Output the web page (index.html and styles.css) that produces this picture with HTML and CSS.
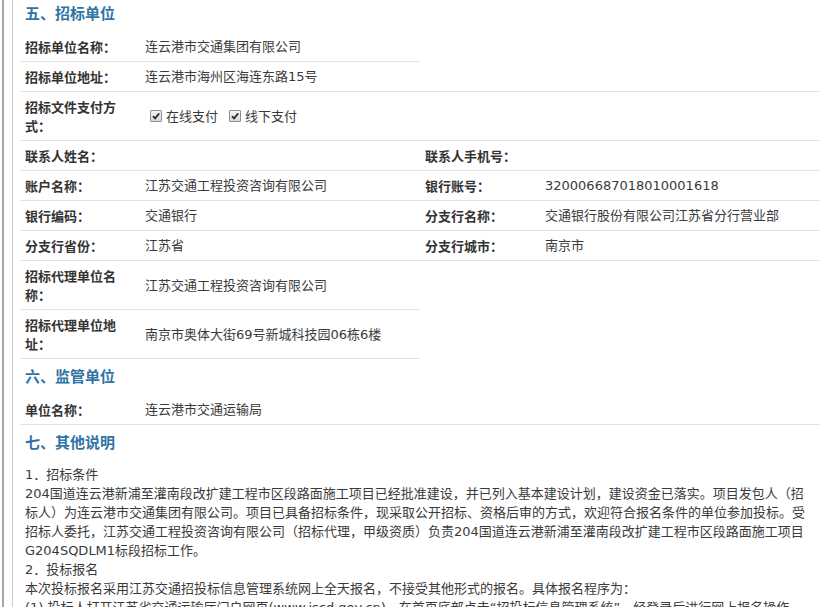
FILE: index.html
```html
<!DOCTYPE html>
<html lang="zh-CN">
<head>
<meta charset="utf-8">
<title>招标公告</title>
<link rel="stylesheet" href="styles.css">
</head>
<body>
<div class="outer">
  <div class="inner">
    <div class="content">
      <h2 class="sec-title">五、招标单位</h2>
      <div class="grid">
        <div class="item half"><span class="lbl">招标单位名称：</span><span class="val">连云港市交通集团有限公司</span></div>
        <div class="empty"></div>
        <div class="item full"><span class="lbl">招标单位地址：</span><span class="val">连云港市海州区海连东路15号</span></div>
        <div class="item full"><span class="lbl">招标文件支付方式：</span><span class="val checks"><span class="cb"><svg viewBox="0 0 10 10" width="10" height="10"><path d="M2 5.2 L4.1 7.4 L8.2 2.4" fill="none" stroke="#2b2b2b" stroke-width="1.7"/></svg></span><span class="cbt">在线支付</span><span class="cb"><svg viewBox="0 0 10 10" width="10" height="10"><path d="M2 5.2 L4.1 7.4 L8.2 2.4" fill="none" stroke="#2b2b2b" stroke-width="1.7"/></svg></span><span class="cbt">线下支付</span></span></div>
        <div class="item half"><span class="lbl">联系人姓名：</span><span class="val"></span></div>
        <div class="item half"><span class="lbl">联系人手机号：</span><span class="val"></span></div>
        <div class="item half"><span class="lbl">账户名称：</span><span class="val">江苏交通工程投资咨询有限公司</span></div>
        <div class="item half"><span class="lbl">银行账号：</span><span class="val">32000668701801​0001618</span></div>
        <div class="item half"><span class="lbl">银行编码：</span><span class="val">交通银行</span></div>
        <div class="item half"><span class="lbl">分支行名称：</span><span class="val">交通银行股份有限公司江苏省分行营业部</span></div>
        <div class="item half"><span class="lbl">分支行省份：</span><span class="val">江苏省</span></div>
        <div class="item half"><span class="lbl">分支行城市：</span><span class="val">南京市</span></div>
        <div class="item half"><span class="lbl">招标代理单位名称：</span><span class="val">江苏交通工程投资咨询有限公司</span></div>
        <div class="empty"></div>
        <div class="item half"><span class="lbl">招标代理单位地址：</span><span class="val">南京市奥体大街69号新城科技园06栋6楼</span></div>
        <div class="empty"></div>
      </div>

      <h2 class="sec-title">六、监管单位</h2>
      <div class="grid">
        <div class="item full"><span class="lbl">单位名称：</span><span class="val">连云港市交通运输局</span></div>
      </div>

      <h2 class="sec-title">七、其他说明</h2>
      <p class="notes">1．招标条件<br>204国道连云港新浦至灌南段改扩建工程市区段路面施工项目已经批准建设，并已列入基本建设计划，建设资金已落实。项目发包人（招<br>标人）为连云港市交通集团有限公司。项目已具备招标条件，现采取公开招标、资格后审的方式，欢迎符合报名条件的单位参加投标。受<br>招标人委托，江苏交通工程投资咨询有限公司（招标代理，甲级资质）负责204国道连云港新浦至灌南段改扩建工程市区段路面施工项目<br>G204SQDLM1标段招标工作。<br>2．投标报名<br>本次投标报名采用江苏交通招投标信息管理系统网上全天报名，不接受其他形式的报名。具体报名程序为：<br>(1) 投标人打开江苏省交通运输厅门户网页(www.jscd.gov.cn)，在首页底部点击“招投标信息管理系统”，经登录后进行网上报名操作</p>
    </div>
  </div>
</div>
</body>
</html>
```

FILE: styles.css
```css
html, body {
  margin: 0;
  padding: 0;
  background: #ffffff;
}
body {
  font-family: "DejaVu Sans", "Noto Sans CJK SC", sans-serif;
  font-size: 13px;
  color: #333333;
  overflow: hidden;
}
.outer {
  margin-left: 2px;
  border-left: 2px solid #a6a6a6;
  padding-left: 8px;
  margin-top: -4px;
}
.inner {
  border-left: 1px solid #b8cfe2;
  padding-left: 7px;
}
.content {
  width: 800px;
}
.sec-title {
  margin: 0;
  height: 36px;
  box-sizing: border-box;
  padding: 7px 0 9px 5px;
  font-size: 15px;
  line-height: 20px;
  font-weight: 700;
  color: #2f74a5;
  font-family: "Noto Sans CJK SC", sans-serif;
}
.grid {
  display: grid;
  grid-template-columns: 400px 400px;
}
.item {
  display: flex;
  align-items: center;
  padding: 5px 0 5px 5px;
  border-bottom: 1px solid #dde2e5;
  line-height: 19px;
  min-height: 19px;
}
.full {
  grid-column: span 2;
}
.lbl {
  width: 100px;
  flex: none;
  margin-right: 20px;
  font-weight: 700;
  color: #333333;
  font-family: "Noto Sans CJK SC", sans-serif;
}
.val {
  color: #3a3a3a;
}
.checks {
  display: flex;
  align-items: center;
}
.cb {
  width: 10px;
  height: 10px;
  border: 1px solid #8e8e8e;
  background: linear-gradient(#f5f5f5, #d9d9d9);
  display: inline-flex;
  margin-left: 5px;
  margin-right: 4px;
  border-radius: 1px;
}
.cbt {
  margin-right: 6px;
}
.notes {
  margin: 0;
  padding: 4px 0 0 5px;
  line-height: 19px;
  white-space: nowrap;
  color: #3a3a3a;
}
```
